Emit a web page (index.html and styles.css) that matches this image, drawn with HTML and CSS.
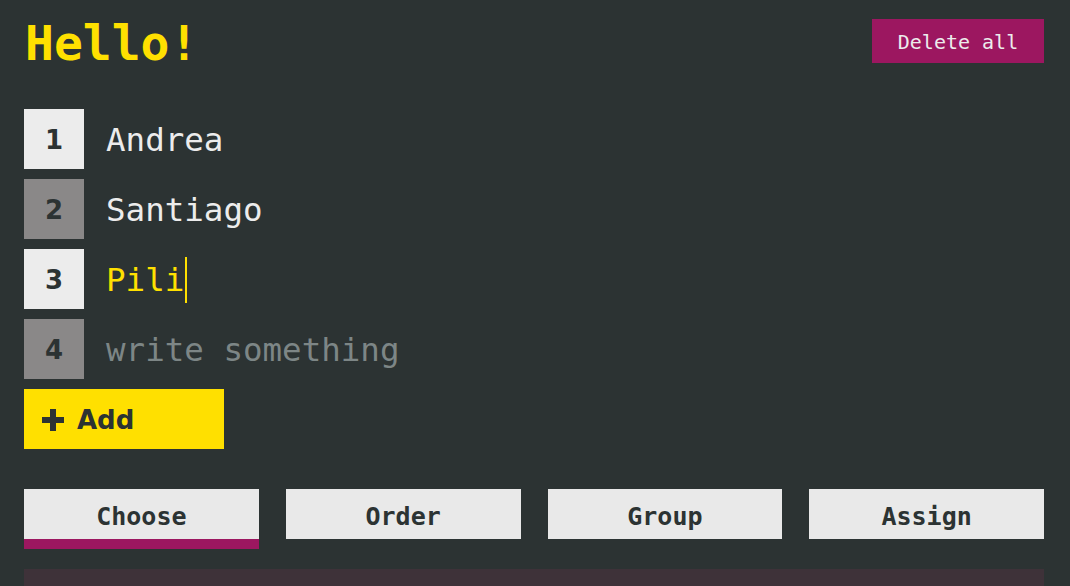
FILE: index.html
```html
<!DOCTYPE html>
<html>
<head>
<meta charset="utf-8">
<link rel="stylesheet" href="styles.css">
</head>
<body>
<header class="top">
  <h1 class="title">Hello!</h1>
  <button class="delete">Delete all</button>
</header>
<ul class="list">
  <li class="row"><span class="num light">1</span><span class="name">Andrea</span></li>
  <li class="row"><span class="num dark">2</span><span class="name">Santiago</span></li>
  <li class="row"><span class="num light">3</span><span class="name active">Pili<span class="caret"></span></span></li>
  <li class="row"><span class="num dark">4</span><span class="name placeholder">write something</span></li>
</ul>
<button class="add"><svg class="plus" width="22" height="22" viewBox="0 0 22 22"><path d="M8 0h6v8h8v6h-8v8H8v-8H0V8h8z" fill="#2c3333"/></svg><span>Add</span></button>
<nav class="tabs">
  <div class="tab selected">Choose</div>
  <div class="tab">Order</div>
  <div class="tab">Group</div>
  <div class="tab">Assign</div>
</nav>
<div class="panel"></div>
</body>
</html>
```
FILE: styles.css
```css
html, body {
  margin: 0;
  background: #2c3333;
}
body {
  padding: 19px 26px 0 24px;
  font-family: "DejaVu Sans Mono", "Liberation Mono", monospace;
  overflow: hidden;
  height: 586px;
  box-sizing: border-box;
}
.top {
  display: flex;
  justify-content: space-between;
  align-items: center;
  height: 44px;
}
.title {
  margin: 0;
  color: #ffe000;
  font-size: 48px;
  font-weight: bold;
  line-height: 44px;
  padding-left: 1px;
  position: relative;
  top: 2px;
}
.delete {
  width: 172px;
  height: 44px;
  border: 0;
  background: #9c1760;
  color: #ececec;
  font-family: "DejaVu Sans Mono", monospace;
  font-size: 20px;
  padding: 2px 0 0;
}
.list {
  list-style: none;
  margin: 46px 0 0;
  padding: 0;
  display: flex;
  flex-direction: column;
  gap: 10px;
}
.row {
  display: flex;
  align-items: center;
  gap: 22px;
  height: 60px;
}
.num {
  width: 60px;
  height: 60px;
  display: flex;
  align-items: center;
  justify-content: center;
  font-family: "DejaVu Sans", sans-serif;
  font-weight: bold;
  font-size: 26px;
  color: #2c3333;
  padding-top: 2px;
  box-sizing: border-box;
}
.num.light { background: #ececec; }
.num.dark { background: #8a8888; }
.name {
  font-size: 32.5px;
  color: #ececec;
  display: flex;
  align-items: center;
  padding-top: 2px;
}
.name.active { color: #ffe000; }
.name.placeholder { color: #7d8686; }
.caret {
  display: inline-block;
  width: 2px;
  height: 46px;
  background: #ffe000;
  margin-left: 1px;
}
.add {
  margin-top: 10px;
  width: 200px;
  height: 60px;
  border: 0;
  background: #ffe000;
  display: flex;
  align-items: center;
  gap: 13px;
  padding: 2px 0 0 18px;
  font-family: "DejaVu Sans", sans-serif;
  font-weight: bold;
  font-size: 26px;
  color: #2c3333;
}
.plus { flex: none; }
.tabs {
  margin-top: 40px;
  display: grid;
  grid-template-columns: repeat(4, 1fr);
  gap: 27px;
  align-items: start;
}
.tab {
  height: 50px;
  background: #e9e9e9;
  color: #2c3333;
  font-weight: bold;
  font-size: 25px;
  display: flex;
  align-items: center;
  justify-content: center;
  box-sizing: border-box;
  padding-top: 4px;
}
.tab.selected {
  height: 60px;
  border-bottom: 10px solid #9c1760;
}
.panel {
  margin-top: 20px;
  height: 40px;
  background: #3e3239;
}
```
